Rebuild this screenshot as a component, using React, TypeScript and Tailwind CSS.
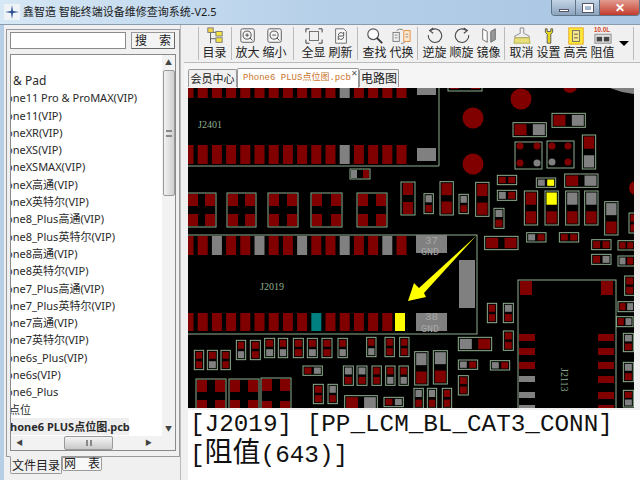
import React from 'react';

const cjk = "font-['Noto_Sans','Noto_Sans_CJK_SC',sans-serif]";

const listItems = [
  'one11 Pro & ProMAX(VIP)',
  'one11(VIP)',
  'oneXR(VIP)',
  'oneXS(VIP)',
  'oneXSMAX(VIP)',
  'oneX高通(VIP)',
  'oneX英特尔(VIP)',
  'one8_Plus高通(VIP)',
  'one8_Plus英特尔(VIP)',
  'one8高通(VIP)',
  'one8英特尔(VIP)',
  'one7_Plus高通(VIP)',
  'one7_Plus英特尔(VIP)',
  'one7高通(VIP)',
  'one7英特尔(VIP)',
  'one6s_Plus(VIP)',
  'one6s(VIP)',
  'one6_Plus',
];

const RED = '#800000';
const GREY = '#808080';
const LINE = '#8fae8f';
const padColor: Record<string, string> = { r: RED, g: GREY, y: '#ffff00' };

// [x, y, w, h, first pad, second pad] in zoomed (3x) crop coordinates
type Comp = [number, number, number, number, string, string];

const lowerLeft: Comp[] = [
  [19, 346, 28, 58, 'r', 'r'], [58, 346, 30, 58, 'r', 'g'], [99, 346, 28, 58, 'r', 'r'],
  [145, 316, 28, 58, 'r', 'g'], [187, 316, 30, 58, 'r', 'r'], [230, 310, 30, 58, 'r', 'g'],
  [271, 310, 28, 58, 'r', 'g'], [316, 310, 30, 58, 'r', 'r'], [358, 310, 30, 58, 'r', 'g'],
  [402, 310, 30, 58, 'r', 'r'], [450, 310, 28, 58, 'r', 'g'], [536, 307, 28, 58, 'r', 'g'],
  [591, 307, 28, 58, 'r', 'r'], [635, 307, 28, 58, 'r', 'r'], [466, 393, 30, 58, 'g', 'r'],
  [507, 393, 30, 58, 'g', 'r'], [552, 393, 28, 58, 'r', 'r'], [593, 393, 28, 58, 'r', 'g'],
  [633, 393, 28, 58, 'r', 'g'], [376, 448, 30, 58, 'r', 'r'], [420, 448, 28, 58, 'g', 'r'],
  [345, 393, 58, 28, 'r', 'g'], [470, 482, 98, 42, 'r', 'g'], [588, 487, 58, 28, 'r', 'g'],
];

const upperRight: Comp[] = [
  [297, 113, 100, 42, 'r', 'g'], [414, 85, 100, 42, 'r', 'g'], [505, 150, 40, 102, 'r', 'g'],
  [250, 271, 58, 28, 'r', 'r'], [250, 316, 58, 30, 'g', 'r'], [367, 279, 58, 28, 'g', 'y'],
  [452, 267, 100, 40, 'r', 'g'], [30, 326, 28, 60, 'g', 'r'], [78, 290, 40, 100, 'r', 'r'],
  [135, 328, 28, 58, 'g', 'r'], [185, 292, 40, 102, 'r', 'r'], [240, 370, 30, 60, 'g', 'r'],
  [331, 318, 40, 102, 'r', 'r'], [393, 318, 40, 102, 'y', 'r'], [455, 318, 40, 102, 'g', 'r'],
  [512, 318, 40, 102, 'g', 'r'], [572, 350, 40, 100, 'g', 'r'], [645, 384, 24, 60, 'r', 'r'],
];

const lowerRight: Comp[] = [
  [212, 4, 100, 40, 'r', 'r'], [338, -7, 58, 28, 'g', 'r'],
  [436, -7, 58, 28, 'r', 'r'], [533, 14, 58, 30, 'r', 'r'], [533, 58, 58, 30, 'r', 'g'],
  [612, 17, 50, 28, 'r', 'r'], [612, 63, 50, 30, 'g', 'r'], [632, 123, 30, 58, 'r', 'r'],
  [612, 200, 50, 30, 'r', 'g'], [607, 245, 50, 30, 'r', 'g'], [220, 205, 28, 58, 'r', 'r'],
  [268, 205, 30, 58, 'g', 'r'], [268, 288, 30, 58, 'r', 'r'], [133, 307, 100, 40, 'g', 'r'],
  [133, 375, 58, 28, 'g', 'r'], [229, 377, 58, 28, 'g', 'r'], [133, 422, 30, 58, 'r', 'r'],
  [2, 350, 40, 100, 'g', 'r'], [58, 347, 42, 100, 'g', 'r'], [0, 460, 28, 60, 'g', 'r'],
  [40, 460, 28, 60, 'g', 'r'], [85, 460, 28, 60, 'r', 'r'], [628, 295, 30, 55, 'g', 'r'],
  [628, 382, 30, 58, 'g', 'r'], [628, 466, 30, 50, 'r', 'g'],
];

function comps(list: Comp[], ox: number, oy: number, prefix: string) {
  return list.map(([zx, zy, zw, zh, a, b], i) => {
    const x = ox + zx / 3;
    const y = oy + zy / 3;
    const w = zw / 3;
    const h = zh / 3;
    const vertical = h > w;
    const len = (vertical ? h : w) * 0.36;
    const thick = (vertical ? w : h) - 3;
    return (
      <g key={prefix + i}>
        <rect x={x} y={y} width={w} height={h} fill="#000" stroke={LINE} strokeWidth={1} />
        {vertical ? (
          <>
            <rect x={x + 1.5} y={y + 1.5} width={thick} height={len} fill={padColor[a]} />
            <rect x={x + 1.5} y={y + h - 1.5 - len} width={thick} height={len} fill={padColor[b]} />
          </>
        ) : (
          <>
            <rect x={x + 1.5} y={y + 1.5} width={len} height={thick} fill={padColor[a]} />
            <rect x={x + w - 1.5 - len} y={y + 1.5} width={len} height={thick} fill={padColor[b]} />
          </>
        )}
      </g>
    );
  });
}

const quadBox = (x: number, y: number, w: number, h: number, key: string) => (
  <g key={key}>
    <rect x={x} y={y} width={w} height={h} fill="#000" stroke={LINE} />
    <rect x={x + 1} y={y + 1} width={10} height={12} fill={RED} />
    <rect x={x + w - 11} y={y + 1} width={10} height={12} fill={RED} />
    <rect x={x + 1} y={y + h - 13} width={10} height={12} fill={RED} />
    <rect x={x + w - 11} y={y + h - 13} width={10} height={12} fill={RED} />
  </g>
);

const headerRows = [
  { y: 88, h: 10, greys: [11] },
  { y: 145, h: 19, greys: [11] },
];

const rowX = (i: number) => 183.5 + i * 14.2;

function Pcb() {
  return (
    <svg width={446} height={320} viewBox="188 88 446 320" className="block bg-black">
      {/* J2401 connector */}
      {headerRows.map((row) =>
        Array.from({ length: 16 }).map((_, i) => (
          <rect
            key={row.y + '-' + i}
            x={rowX(i)}
            y={row.y}
            width={10}
            height={row.h}
            fill={row.greys.includes(i) ? GREY : RED}
          />
        ))
      )}
      <polyline points="188,166 439,166 439,88" fill="none" stroke={LINE} />
      <rect x={417} y={88} width={19} height={7} fill={GREY} />
      <rect x={417} y={148} width={19} height={13} fill={GREY} />
      <text x={198} y={128} fontSize={10} fill="#8fae8f" fontFamily="Liberation Serif, serif">J2401</text>

      <rect x={350} y={169} width={20} height={10} fill="#000" stroke={LINE} />
      <rect x={351} y={170} width={6} height={8} fill={GREY} />
      <rect x={363} y={170} width={6} height={8} fill={RED} />

      {quadBox(187, 193, 29, 34, 'q1')}
      {quadBox(227, 193, 29, 34, 'q2')}
      {quadBox(268, 193, 30, 34, 'q3')}
      {quadBox(311, 193, 31, 34, 'q4')}
      {quadBox(357, 193, 30, 34, 'q5')}
      <rect x={401} y={182} width={14} height={33} fill="#000" stroke={LINE} />
      <rect x={403} y={183} width={10} height={12} fill={RED} />
      <rect x={403} y={202} width={10} height={12} fill={RED} />

      {/* J2019 connector */}
      <rect x={187} y={235} width={290} height={99} fill="none" stroke={LINE} />
      {Array.from({ length: 16 }).map((_, i) => (
        <rect key={'a' + i} x={rowX(i)} y={236} width={10} height={19} fill={i % 3 === 2 ? GREY : RED} />
      ))}
      {Array.from({ length: 15 }).map((_, i) => (
        <rect key={'b' + i} x={rowX(i)} y={313} width={10} height={18} fill={i === 9 ? '#008080' : RED} />
      ))}
      <rect x={395} y={313} width={10} height={18} fill="#ffff00" />
      <rect x={416} y={235} width={31} height={18} fill={GREY} />
      <rect x={459} y={260} width={16} height={48} fill={GREY} />
      <rect x={416} y={313} width={31} height={18} fill={GREY} />
      <text x={425} y={244} fontSize={11} fill="#a8a8a8" fontFamily="Liberation Mono, monospace">37</text>
      <text x={421} y={255} fontSize={10} fill="#a8a8a8" fontFamily="Liberation Mono, monospace">GND</text>
      <text x={425} y={320} fontSize={11} fill="#a8a8a8" fontFamily="Liberation Mono, monospace">38</text>
      <text x={421} y={332} fontSize={10} fill="#a8a8a8" fontFamily="Liberation Mono, monospace">GND</text>
      <text x={260} y={290} fontSize={10} fill="#8fae8f" fontFamily="Liberation Serif, serif">J2019</text>

      {/* arrow */}
      <polygon points="408,301 414,283 419,288 476,236 424,293 426,297" fill="#ffff00" />

      {/* round pads */}
      <circle cx={521} cy={99} r={10.5} fill={RED} />
      <circle cx={473} cy={118} r={10.5} fill={RED} />
      <circle cx={473} cy={164} r={10.5} fill={RED} />
      <circle cx={570} cy={86} r={7} fill={RED} />
      <circle cx={636} cy={188} r={7} fill={RED} />
      <polygon points="610,88 634,88 634,94 622,92" fill={GREY} />
      <rect x={448} y={84} width={34} height={7} fill="#000" stroke={LINE} />
      <rect x={450} y={85} width={9} height={4} fill={RED} />
      <rect x={471} y={85} width={9} height={4} fill={RED} />

      {/* bga */}
      <rect x={515} y={142} width={27} height={27} fill="#000" stroke={LINE} />
      <rect x={547} y={141} width={27} height={27} fill="#000" stroke={LINE} />
      {[
        [520, 146, RED], [537, 146, RED], [520, 163, RED], [537, 163, GREY],
        [552, 146, RED], [568, 146, RED], [552, 162, GREY], [568, 162, RED],
      ].map(([cx, cy, fill]) => (
        <circle key={`${cx}-${cy}`} cx={cx as number} cy={cy as number} r={3.5} fill={fill as string} />
      ))}

      {comps(lowerLeft, 188, 235, 'll')}
      {comps(upperRight, 414, 85, 'ur')}
      {comps(lowerRight, 414, 235, 'lr')}

      {quadBox(196, 379, 30, 34, 'q6')}
      {quadBox(229, 379, 30, 34, 'q7')}
      {quadBox(261, 378, 30, 36, 'q8')}

      {/* J2113 */}
      <rect x={518} y={280} width={98} height={140} fill="#000" stroke={LINE} />
      <rect x={520} y={281} width={12} height={14} fill={RED} />
      <rect x={601} y={281} width={12} height={14} fill={RED} />
      {[334, 348, 362, 376, 392, 405].map((y, i) => (
        <g key={y}>
          <rect x={519} y={y} width={16} height={i < 3 ? 7 : 6} fill={i < 3 ? RED : GREY} />
          <rect x={598} y={y} width={16} height={7} fill={RED} />
        </g>
      ))}
      <text x={0} y={0} fontSize={10} fill="#8fae8f" fontFamily="Liberation Serif, serif" transform="translate(561,368) rotate(90)">J2113</text>
    </svg>
  );
}

const I = ({ children }: { children: React.ReactNode }) => (
  <svg width={20} height={18} viewBox="0 0 22 20" className="block">{children}</svg>
);

const icons: Record<string, React.ReactNode> = {
  目录: (
    <I>
      <path d="M6 3v15M6 6h6M6 13h6" stroke="#555" fill="none" />
      <rect x={3} y={1} width={6} height={5} fill="#f5d742" stroke="#777" />
      <rect x={12} y={5} width={7} height={5} fill="#f5e342" stroke="#777" />
      <rect x={12} y={12} width={7} height={5} fill="#f5e342" stroke="#777" />
    </I>
  ),
  放大: (
    <I>
      <rect x={3} y={2} width={15} height={15} rx={2} fill="#f4f4f4" stroke="#555" />
      <circle cx={10} cy={9} r={4.5} fill="none" stroke="#444" />
      <path d="M8 9h4M10 7v4M13 12l3 3" stroke="#444" fill="none" />
    </I>
  ),
  缩小: (
    <I>
      <rect x={3} y={2} width={15} height={15} rx={2} fill="#f4f4f4" stroke="#555" />
      <circle cx={10} cy={9} r={4.5} fill="none" stroke="#444" />
      <path d="M8 9h4M13 12l3 3" stroke="#444" fill="none" />
    </I>
  ),
  全显: (
    <I>
      <rect x={6} y={5} width={10} height={10} fill="none" stroke="#666" />
      <path d="M2 6V2h4M16 2h4v4M20 14v4h-4M6 18H2v-4" stroke="#333" fill="none" />
    </I>
  ),
  刷新: (
    <I>
      <path d="M5 2h9l3 3v13H5z" fill="#f8f8f8" stroke="#666" />
      <path d="M8 9a3 3 0 0 1 5-2l1-1v4h-3M14 11a3 3 0 0 1-5 2l-1 1v-4h3" fill="none" stroke="#444" />
    </I>
  ),
  查找: (
    <I>
      <circle cx={9} cy={8} r={6} fill="#fdfdfd" stroke="#555" strokeWidth={1.3} />
      <path d="M13 12l6 6" stroke="#333" strokeWidth={2} />
    </I>
  ),
  代换: (
    <I>
      <rect x={1} y={6} width={7} height={10} fill="#eee" stroke="#777" />
      <rect x={13} y={4} width={7} height={12} fill="#fde8d0" stroke="#e58a3c" />
      <path d="M15 8h3M15 11h3M3 9h3M3 12h3" stroke="#888" />
      <path d="M5 4q3-3 7-1M10 18q2 1 4-1" fill="none" stroke="#777" />
    </I>
  ),
  逆旋: (
    <I>
      <path d="M6 4a7.5 7.5 0 1 1-2.5 5" fill="none" stroke="#444" strokeWidth={1.2} />
      <path d="M9 1L5 4l4 3" fill="none" stroke="#444" strokeWidth={1.2} />
    </I>
  ),
  顺旋: (
    <I>
      <path d="M16 4a7.5 7.5 0 1 0 2.5 5" fill="none" stroke="#444" strokeWidth={1.2} />
      <path d="M13 1l4 3-4 3" fill="none" stroke="#444" strokeWidth={1.2} />
    </I>
  ),
  镜像: (
    <I>
      <path d="M4 2l5 3v12l-5-3z" fill="#fff" stroke="#666" />
      <path d="M18 2l-5 3v12l5-3z" fill="#999" stroke="#666" />
    </I>
  ),
  取消: (
    <I>
      <path d="M9 1h4v6l6 3v2H3v-2l6-3z" fill="#eee" stroke="#888" />
      <path d="M3 12h16l1 6H2z" fill="#e8e07a" stroke="#b5ad50" />
    </I>
  ),
  设置: (
    <I>
      <path d="M7 2v4l2 2v10h4V8l2-2V2l-2 0v3h-4V2z" fill="#e6d81f" stroke="#555" />
    </I>
  ),
  高亮: (
    <I>
      <rect x={3} y={1} width={16} height={18} fill="#ffea3a" stroke="#e2a21a" />
      <rect x={7} y={4} width={8} height={12} fill="#f8e98a" stroke="#666" />
      <path d="M9 8h4M9 12h4" stroke="#444" />
    </I>
  ),
  阻值: (
    <I>
      <text x={1} y={6} fontSize={7} fontWeight={700} fill="#d2452a" fontFamily="Liberation Sans, sans-serif">10.0L</text>
      <rect x={2} y={8} width={18} height={10} fill="#ddd" stroke="#888" />
      <rect x={4} y={11} width={6} height={5} fill="#444" />
      <rect x={12} y={11} width={6} height={5} fill="#444" />
    </I>
  ),
};

const toolbarGroups = [
  { cls: 'w-[33px] pl-[2px]', items: ['目录'] },
  { cls: 'w-[62px] pl-[2px]', items: ['放大', '缩小'] },
  { cls: 'w-[64px] pl-[6px]', items: ['全显', '刷新'] },
  { cls: 'w-[60px] pl-[3px]', items: ['查找', '代换'] },
  { cls: 'w-[87px] pl-[3px]', items: ['逆旋', '顺旋', '镜像'] },
  { cls: 'w-[130px] pl-[3px] border-r', items: ['取消', '设置', '高亮', '阻值'] },
];

function ToolButton({ label }: { label: string }) {
  return (
    <div className="w-[27px] shrink-0 flex flex-col items-center">
      <div className="h-[19px]">{icons[label]}</div>
      <span className={`text-[12px] leading-[15px] text-[#222] whitespace-nowrap ${cjk}`}>{label}</span>
    </div>
  );
}

export default function App() {
  return (
    <div className={`w-[640px] h-[480px] overflow-hidden flex flex-col bg-[#f0f0f0] ${cjk}`}>
      {/* title bar */}
      <div className="h-[25px] shrink-0 flex items-start bg-gradient-to-r from-[#d6e7f5] via-[#b6d0e9] to-[#a9c5e2] border-b border-[#8a9bad]">
        <svg width={16} height={16} viewBox="0 0 16 16" className="ml-[4px] mt-[4px]">
          <rect width={16} height={16} fill="#eef3f8" />
          <path d="M8 1l1 6 6 1-6 1-1 6-1-6-6-1 6-1z" fill="#2a4f8f" />
        </svg>
        <span className="ml-[3px] mt-[3px] text-[11px] leading-[18px] text-[#1a1a1a] whitespace-nowrap">鑫智造 智能终端设备维修查询系统-V2.5</span>
        <div className="ml-auto flex h-[16px] border border-t-0 border-[#5f7388] rounded-b-[4px] overflow-hidden">
          <div className="w-[24px] bg-gradient-to-b from-[#c3d4e6] to-[#8ba3bd] border-r border-[#5f7388] flex items-end justify-center pb-[3px]">
            <div className="w-[10px] h-[3px] bg-white border border-[#556]" />
          </div>
          <div className="w-[24px] bg-gradient-to-b from-[#c3d4e6] to-[#8ba3bd] border-r border-[#5f7388] flex items-center justify-center">
            <div className="w-[10px] h-[8px] border-2 border-white outline outline-1 outline-[#556]" />
          </div>
          <div className="w-[39px] bg-gradient-to-b from-[#e09a8e] to-[#c2392c] flex items-center justify-center text-white text-[12px] font-bold leading-none">✕</div>
        </div>
      </div>

      <div className="flex-1 flex min-h-0 border-l-4 border-[#b7cfe6]">
        {/* left panel */}
        <div className="w-[176px] shrink-0 pl-[2px] pt-[4px] flex flex-col">
          <div className="h-[428px] border border-[#9a9a9a] bg-[#f0f0f0] pl-[3px] pr-[3px] pt-[2px] pb-[5px] flex flex-col">
            <div className="flex gap-[5px] h-[17px] shrink-0">
              <div className="w-[116px] border border-[#8a8a8a] bg-white" />
              <button type="button" className="w-[44px] border border-[#999] border-b-[#666] border-r-[#666] bg-[#f4f4f4] text-[12px] leading-[15px] text-[#222]">搜　索</button>
            </div>
            <div className="mt-[5px] flex-1 min-h-0 border border-[#8a8a8a] bg-white flex relative">
              <div className="flex-1 min-w-0 overflow-hidden pt-[17px] text-[11px] leading-[17.3px] text-[#2a2a2a] whitespace-nowrap">
                <div className="pl-[2px] text-[12px]">&amp; Pad</div>
                {listItems.map((t) => (
                  <div key={t} className="-ml-[5px]">{t}</div>
                ))}
                <div className="-ml-[2px]">点位</div>
                <div className="-ml-px w-[119px] bg-[#efefef] font-bold">hone6 PLUS点位图.pcb</div>
              </div>
              {/* vertical scrollbar */}
              <div className="w-[13px] shrink-0 mb-[14px] bg-[#f2f2f2] flex flex-col items-center">
                <div className="h-[15px] text-[7px] leading-[15px] text-[#444]">▲</div>
                <div className="w-[12px] h-[126px] border border-[#9a9a9a] rounded-[2px] bg-gradient-to-r from-[#f2f2f2] to-[#cfcfcf] flex items-center justify-center">
                  <div className="w-[6px] h-[7px] border-y-2 border-[#888]" />
                </div>
                <div className="mt-auto h-[15px] text-[7px] leading-[15px] text-[#444]">▼</div>
              </div>
              {/* horizontal scrollbar */}
              <div className="absolute left-0 right-0 bottom-0 h-[14px] bg-[#f2f2f2] flex items-center">
                <span className="ml-[5px] text-[7px] text-[#444]">◀</span>
                <div className="ml-[41px] w-[49px] h-[14px] border border-[#9a9a9a] rounded-[2px] bg-gradient-to-b from-[#f4f4f4] to-[#c9c9c9] flex items-center justify-center">
                  <div className="w-[6px] h-[6px] border-x-2 border-[#888]" />
                </div>
                <span className="ml-[32px] text-[7px] text-[#444]">▶</span>
              </div>
            </div>
          </div>
          <div className="flex pl-[4px] -mt-px">
            <div className="w-[52px] h-[18px] bg-[#f0f0f0] border border-t-[#f0f0f0] border-[#9a9a9a] rounded-b-[2px] text-center text-[12px] leading-[17px] text-[#222] relative">文件目录</div>
            <div className="w-[40px] h-[14px] mt-px bg-[#f8f8f8] border border-[#9a9a9a] rounded-b-[2px] text-center text-[12px] leading-[12px] text-[#222]">网　表</div>
          </div>
        </div>

        {/* splitter */}
        <div className="w-[4px] shrink-0 border-l border-[#bbb] bg-[#f0f0f0]" />

        {/* right panel */}
        <div className="flex-1 min-w-0 flex flex-col">
          {/* toolbar */}
          <div className="h-[38px] shrink-0 flex items-start pt-[2px] pl-[14px] border-b border-[#bbb]">
            {toolbarGroups.map((g) => (
              <div key={g.items[0]} className={`h-[33px] shrink-0 flex border-l border-[#bbb] ${g.cls}`}>
                {g.items.map((label) => (
                  <ToolButton key={label} label={label} />
                ))}
                {g.items.length === 4 && (
                  <div className="ml-[3px] mt-[14px] w-0 h-0 border-x-[5px] border-x-transparent border-t-[5px] border-t-black" />
                )}
              </div>
            ))}
          </div>

          {/* tabs */}
          <div className="h-[25px] shrink-0 flex items-end pl-[4px] bg-[#f5f5f5]">
            <div className="w-[49px] h-[18px] mb-px border border-b-0 border-[#999] bg-[#f0f0f0] rounded-t-[2px] text-center text-[11px] leading-[17px] text-[#222] whitespace-nowrap">会员中心</div>
            <div className="w-[122px] h-[20px] border border-b-0 border-[#999] bg-white rounded-t-[2px] relative pl-[5px] font-['Liberation_Mono','Noto_Sans_CJK_SC',monospace] text-[9px] leading-[19px] text-[#c9742a] whitespace-nowrap">
              Phone6 PLUS点位图.pcb
              <span className="absolute right-0 top-0 text-[8px] leading-[10px] text-[#555] font-['Liberation_Sans',sans-serif]">✕</span>
            </div>
            <div className="w-[40px] h-[18px] mb-px border border-b-0 border-[#999] bg-[#f0f0f0] rounded-t-[2px] text-center text-[12px] leading-[17px] text-[#222]">电路图</div>
          </div>

          {/* board view */}
          <div className="h-[320px] shrink-0 pl-[4px] bg-[#f0f0f0]">
            <Pcb />
          </div>

          {/* net info */}
          <div className="flex-1 ml-[4px] mt-[2px] bg-white pl-[2px] font-['Liberation_Mono','Noto_Sans_CJK_SC',monospace] text-[24.3px] leading-[30px] text-[#111] overflow-hidden whitespace-nowrap">
            <div>[J2019] [PP_LCM_BL_CAT3_CONN]</div>
            <div>[<span className="text-[28px]">阻值</span>(643)]</div>
          </div>
        </div>
      </div>
    </div>
  );
}
